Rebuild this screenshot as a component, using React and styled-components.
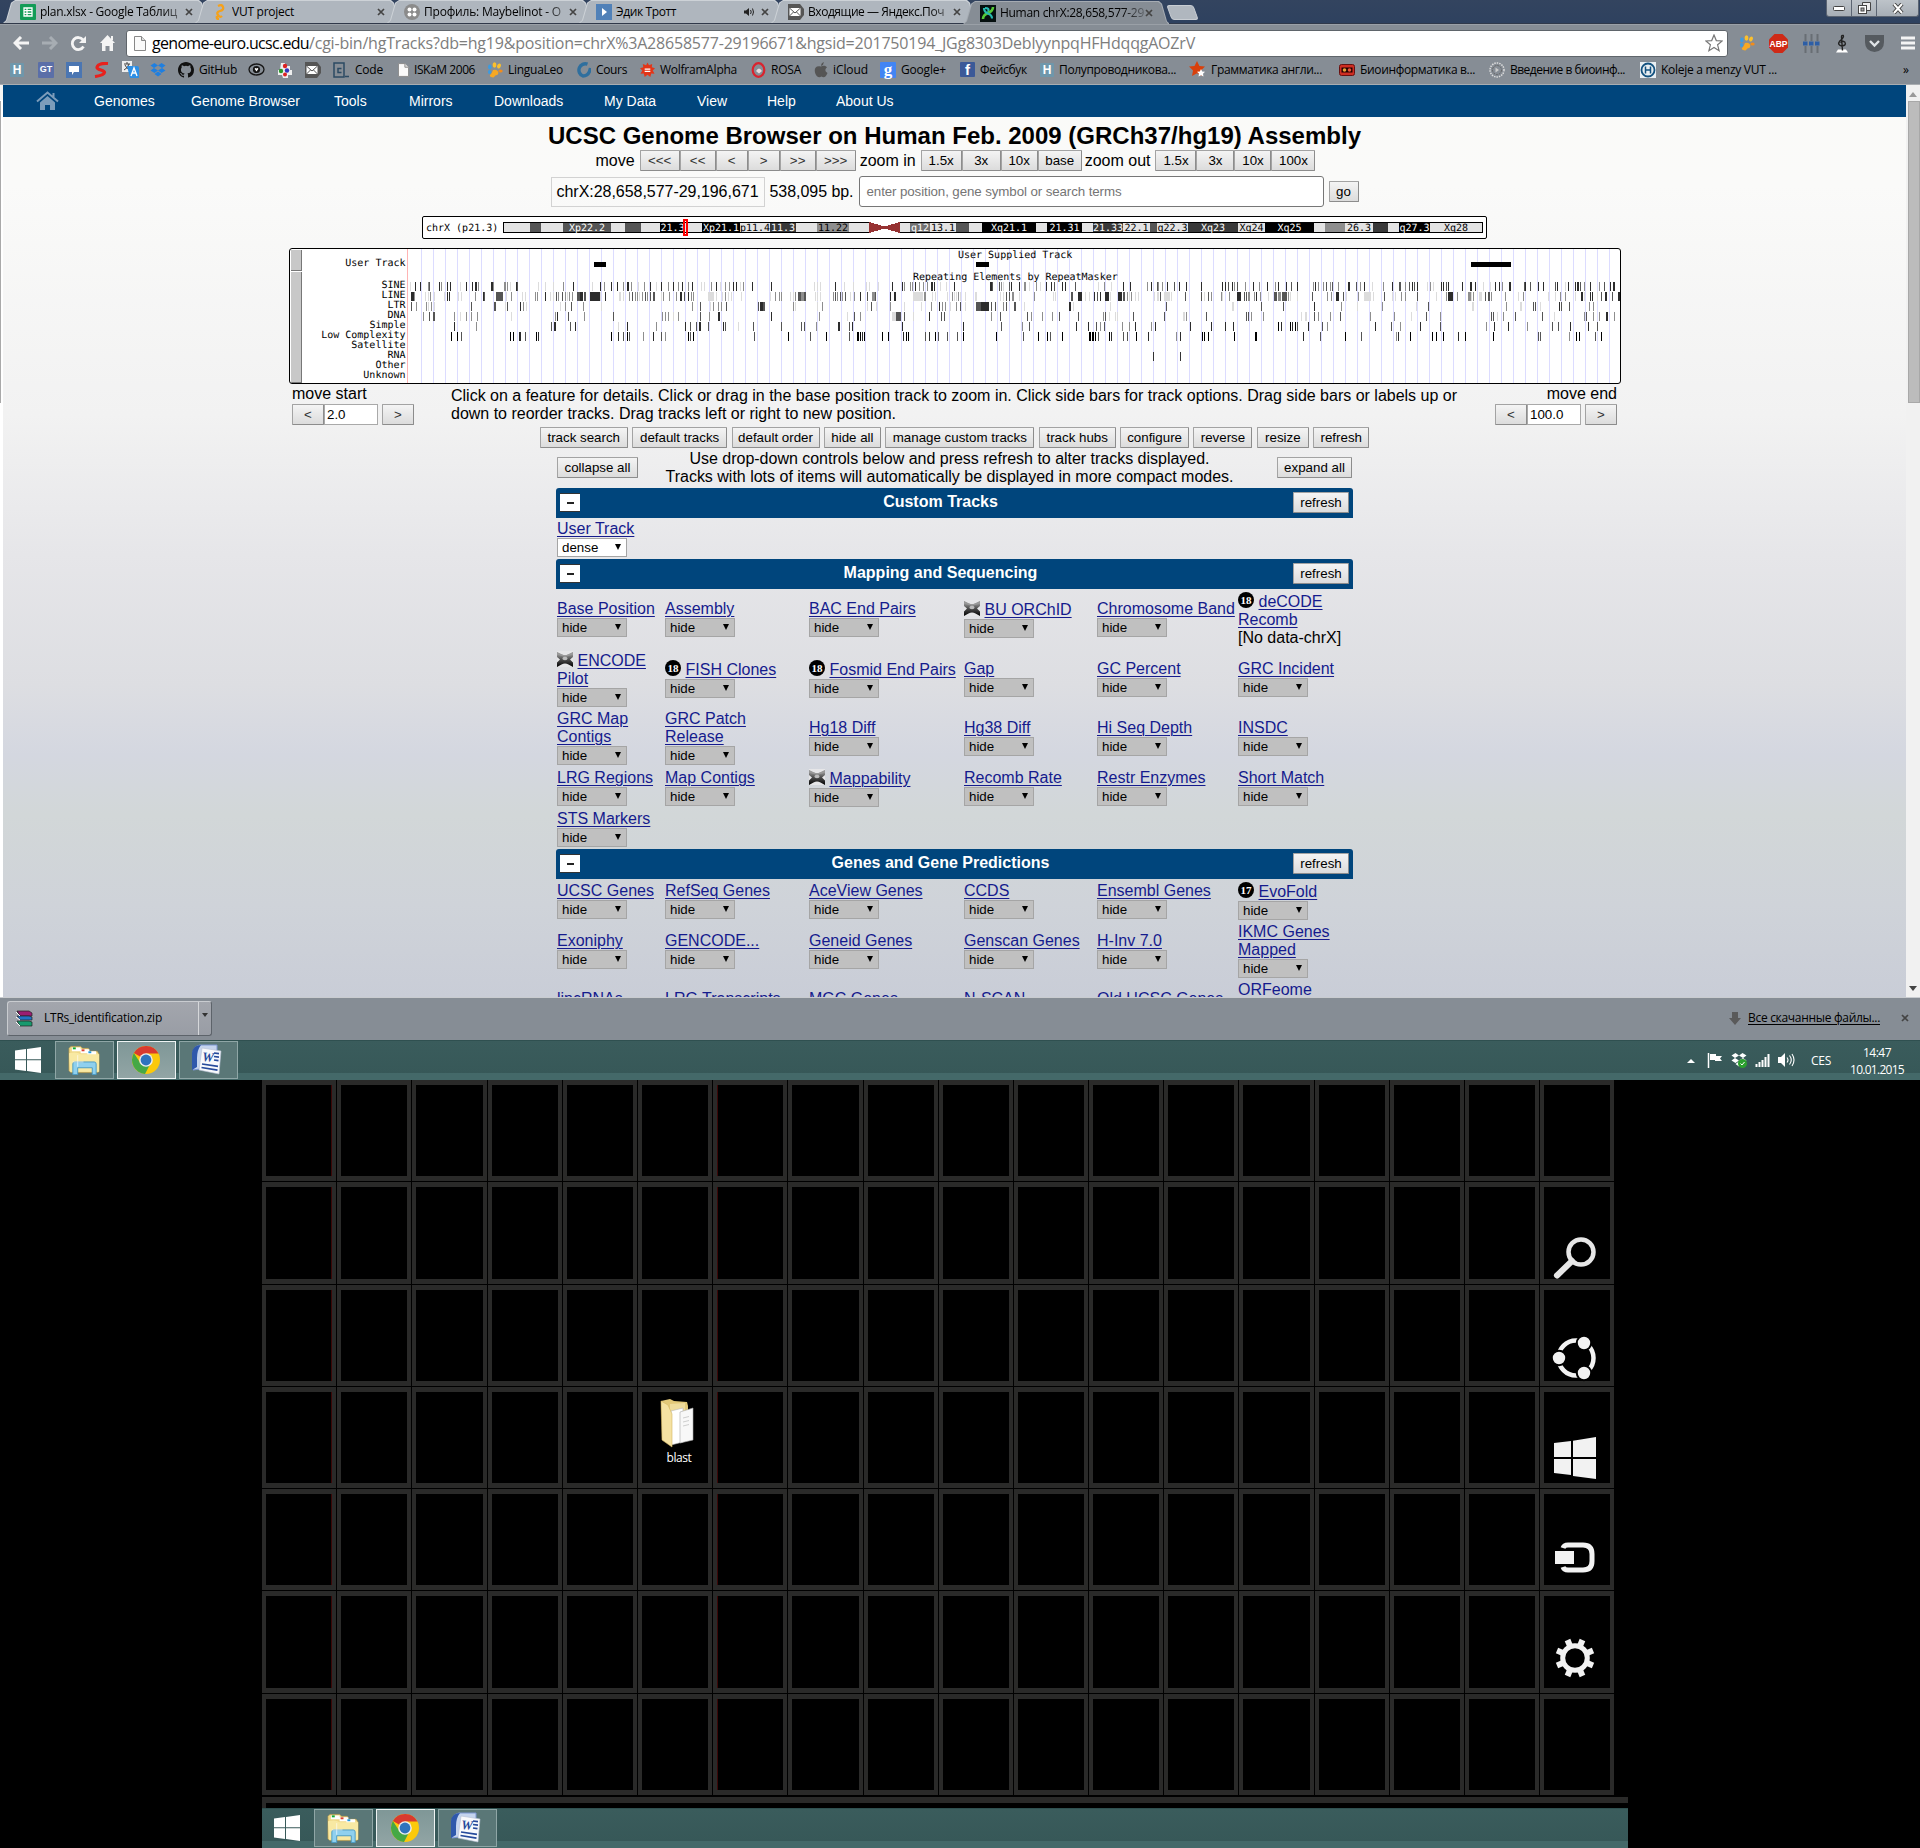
import React, { useLayoutEffect, useRef, useState } from "react";
import styled, { createGlobalStyle, css } from "styled-components";

const UI = `"Open Sans", "Noto Sans", sans-serif`;
const ARIAL = `"Liberation Sans", Arial, sans-serif`;
const NAVY = "#00457c";

const Global = createGlobalStyle`
  html, body { margin: 0; padding: 0; background: #000; }
  *, *::before, *::after { box-sizing: border-box; }
  svg { display: block; flex: none; }
`;

/* ---------- text that is tracked to a known width ---------- */
const FitBox = styled.span`
  display: inline-block;
  white-space: pre;
  flex: none;
`;
function Fit({ w, children }) {
  const ref = useRef(null);
  const [ls, setLs] = useState(0);
  useLayoutEffect(() => {
    const el = ref.current;
    if (!el) return;
    el.style.letterSpacing = "0px";
    const natural = el.getBoundingClientRect().width;
    const v = (w - natural) / String(children).length;
    el.style.letterSpacing = v + "px";
    setLs(v);
  }, [w, children]);
  return <FitBox ref={ref} style={{ letterSpacing: ls }}>{children}</FitBox>;
}

/* ---------- window frame ---------- */
const Screen = styled.div`
  width: 1920px;
  height: 1848px;
  overflow: hidden;
  background: #000;
  display: flex;
  flex-direction: column;
`;
const TabStrip = styled.div`
  height: 24px;
  background: linear-gradient(#33445f, #2e415f);
  display: flex;
  align-items: flex-end;
  padding-left: 3px;
  flex: none;
  border-bottom: 1px solid #30394a;
`;
const Tab = styled.div`
  position: relative;
  width: 206px;
  height: 23px;
  margin-right: -14px;
  margin-bottom: ${(p) => (p.$active ? "-1px" : "0")};
  display: flex;
  align-items: center;
  padding: 1px 0 0 17px;
  font: 12px ${UI};
  color: #000;
  z-index: ${(p) => (p.$active ? 2 : 1)};
  clip-path: polygon(0 100%, 3px 88%, 8px 12%, 12px 0, 196px 0, 199px 12%, 204px 88%, 207px 100%);
  background: ${(p) => (p.$active ? "#a5abb2" : "#cdd2d7")};
  &::before {
    content: "";
    position: absolute;
    inset: 0;
    z-index: -1;
    clip-path: polygon(1px 100%, 4px 88%, 9px 14%, 12px 1px, 195px 1px, 198px 14%, 203px 88%, 205px 100%);
    background: ${(p) => (p.$active ? "#868d95" : "#afb6be")};
  }
`;
const TabLabel = styled.div`
  width: ${(p) => p.$w}px;
  margin-left: 4px;
  line-height: 18px;
  overflow: hidden;
  white-space: nowrap;
  ${(p) => p.$fade && css`mask-image: linear-gradient(90deg, #000 84%, rgba(0,0,0,.25));`}
`;
const NewTab = styled.div`
  width: 27px;
  height: 15px;
  margin: 0 0 3px 14px;
  background: #b0b7bf;
  border: 1px solid #c8cdd3;
  border-radius: 3px;
  transform: skewX(20deg);
`;
const WindowButtons = styled.div`
  margin-left: auto;
  margin-right: 1px;
  align-self: flex-start;
  display: flex;
  height: 17px;
  border: 1px solid #5b6472;
  border-top: 0;
  background: linear-gradient(#bdc3c9, #a7aeb6);
  border-radius: 0 0 3px 3px;
`;
const WindowButton = styled.div`
  width: ${(p) => p.$w}px;
  display: flex;
  align-items: center;
  justify-content: center;
  & + & { border-left: 1px solid #5b6472; }
`;
const Toolbar = styled.div`
  height: 36px;
  flex: none;
  background: #868d95;
  border-top: 1px solid #9aa0a7;
  display: flex;
  align-items: center;
  padding: 1px 6px 0 13px;
`;
const ToolIcon = styled.div`
  width: ${(p) => p.$w}px;
  padding-left: ${(p) => p.$pl || 0}px;
  flex: none;
`;
const Omnibox = styled.div`
  width: 1602px;
  height: 27px;
  flex: none;
  background: #fff;
  border: 1px solid #5f656b;
  border-radius: 3px;
  display: flex;
  align-items: center;
  padding: 0 4px 0 7px;
  font: 16px/22px ${UI};
  color: #7d7d7d;
  b { font-weight: 400; color: #000; margin-left: 6px; }
`;
const StarSlot = styled.div`margin-left: auto;`;
const Bookmarks = styled.div`
  height: 25px;
  flex: none;
  background: #868d95;
  border-bottom: 1px solid #a9adb1;
  display: flex;
  align-items: center;
  padding: 0 0 5px 10px;
  font: 12px/18px ${UI};
  color: #000;
`;
const Bookmark = styled.div`
  width: ${(p) => p.$w}px;
  display: flex;
  align-items: center;
  gap: 5px;
  flex: none;
`;
const Viewport = styled.div`
  height: 912px;
  flex: none;
  display: flex;
  background: #f2f2f2;
`;
const LeftEdge = styled.div`
  width: 3px;
  background: linear-gradient(#f6f6f4 15px, #fff 15px);
  display: flex;
  &::before { content: ""; width: 1px; height: 302px; margin-top: 16px; background: #a9a9a9; }
`;
const Scrollbar = styled.div`
  width: 14px;
  background: #f1f1f1;
  display: flex;
  flex-direction: column;
  align-items: center;
  justify-content: space-between;
  padding: 7px 0 6px;
`;
const Thumb = styled.div`
  width: 12px;
  height: 302px;
  margin: 4px 0 auto 2px;
  background: #bcbcbc;
  border: 1px solid #a8a8a8;
`;
const Page = styled.main`
  width: 1903px;
  height: 912px;
  overflow: hidden;
  font: 16px/18px ${ARIAL};
  color: #000;
  background: linear-gradient(#fafaf8 0, #fafaf9 100px, #f2f2f2 330px, #e6e6e9 470px, #dddee2 600px, #d4d7e0 670px, #d2d7d8 730px, #cfd3d9 820px, #c9cdd7 912px);
  display: flex;
  flex-direction: column;
  align-items: center;
`;
const Nav = styled.nav`
  width: 100%;
  height: 32px;
  flex: none;
  background: ${NAVY};
  color: #fff;
  font-size: 14px;
  display: flex;
  align-items: center;
  padding: 0 0 2px 33px;
`;
const NavItem = styled.span`
  width: ${(p) => p.$w}px;
  padding-top: 1px;
  white-space: nowrap;
  flex: none;
`;
const Title = styled.h1`
  margin: 5px 0 0;
  height: 28px;
  font: bold 24px/28px ${ARIAL};
  flex: none;
`;
const Row = styled.div`
  display: flex;
  align-items: center;
  flex: none;
  gap: ${(p) => p.$gap || 0}px;
  height: ${(p) => p.$h}px;
  margin-top: ${(p) => p.$mt || 0}px;
  padding-left: ${(p) => p.$pl || 0}px;
`;
const Button = styled.button`
  width: ${(p) => p.$w}px;
  height: 21px;
  flex: none;
  padding: 0;
  border: 1px solid #a3a3a3;
  border-bottom-color: #8c8c8c;
  border-right-color: #8c8c8c;
  border-radius: 1px;
  background: linear-gradient(#f4f4f4, #dcdcdc);
  font: 13.33px/17px ${ARIAL};
  color: ${(p) => (p.$dim ? "#333" : "#000")};
  white-space: nowrap;
`;
const Lead = styled.span`margin: 0 5px 0 ${(p) => p.$ml || 0}px; white-space: nowrap;`;
const PositionBox = styled.div`
  width: 214px;
  height: 30px;
  border: 1px solid #d2d2d2;
  padding: 5px 5px;
  white-space: nowrap;
`;
const SearchBox = styled.div`
  width: 465px;
  height: 31px;
  border: 1px solid #767676;
  border-radius: 3px;
  background: #fff;
  font-size: 13.33px;
  color: #757575;
  padding: 6px 7px;
`;
const Ideogram = styled.div`
  width: 1065px;
  height: 23px;
  flex: none;
  margin-top: 9px;
  border: 1px solid #000;
  border-radius: 2px;
  background: #fff;
`;
const TrackFrame = styled.div`
  width: 1332px;
  height: 136px;
  flex: none;
  margin: 9px 0 0 1px;
  border: 1px solid #000;
  border-radius: 3px;
  background: #fff;
  overflow: hidden;
`;
const Below = styled.div`
  width: 1325px;
  height: 43px;
  flex: none;
  display: flex;
`;
const MoveBlock = styled.div`
  padding-top: 1px;
  display: flex;
  flex-direction: column;
  gap: 1px;
  align-items: ${(p) => (p.$right ? "flex-end" : "flex-start")};
`;
const NumberInput = styled.div`
  width: 54px;
  height: 21px;
  margin-right: 4px;
  border: 1px solid #a9a9a9;
  background: #fff;
  font-size: 13.33px;
  padding: 1px 2px;
`;
const Hint = styled.p`
  margin: 3px auto 0 37px;
  width: 1020px;
`;
const NoteRow = styled.div`
  width: 797px;
  height: 40px;
  flex: none;
  display: flex;
  justify-content: space-between;
  align-items: center;
  padding: 0 1px 1px;
  text-align: center;
`;
const Note = styled.p`margin: 0; padding-right: 16px;`;
const Group = styled.section`
  width: 797px;
  flex: none;
  padding-bottom: ${(p) => p.$pad || 0}px;
`;
const GroupBar = styled.header`
  height: 30px;
  background: ${NAVY};
  border-radius: 3px 3px 0 0;
  display: flex;
  align-items: center;
  justify-content: space-between;
  padding: 0 4px 1px 4px;
  color: #fff;
  font-weight: bold;
`;
const GroupTitle = styled.span`margin: 0 0 2px 8px;`;
const Collapse = styled.span`
  width: 20px;
  height: 19px;
  background: #fff;
  border: 1px solid #333;
  border-width: 1px 0;
  display: flex;
  align-items: center;
  justify-content: center;
  &::after { content: ""; width: 7px; height: 2px; background: #222; }
`;
const GridRow = styled.div`
  display: grid;
  grid-template-columns: 108px 144px 155px 133px 141px 115px;
  align-items: center;
  height: ${(p) => p.$h}px;
  padding-left: 1px;
`;
const Cell = styled.div`
  padding-top: ${(p) => (p.$badge ? 2 : 0)}px;
  white-space: nowrap;
`;
const Link = styled.a`
  color: #151b8d;
  text-decoration: underline;
  text-underline-offset: 2px;
  text-decoration-thickness: 1px;
`;
const BadgeSlot = styled.span`
  display: inline-block;
  width: 16px;
  height: 16px;
  margin: -4px 4.500px -2px 0;
  vertical-align: 1px;
`;
const Select = styled.div`
  width: 70px;
  height: 19px;
  border: 1px solid #a5a5a5;
  background: ${(p) => (p.$on ? "#fff" : "#c0c0c0")};
  font-size: 13.33px;
  line-height: 17px;
  padding: 0 5px 0 4px;
  display: flex;
  justify-content: space-between;
  align-items: center;
`;
const Caret = styled.i`
  border: 3.500px solid transparent;
  border-top: 6px solid #000;
  border-bottom: 0;
  margin-bottom: 2px;
`;

/* ---------- downloads shelf ---------- */
const Shelf = styled.div`
  height: 43px;
  flex: none;
  background: #868d95;
  border-top: 1px solid #c9ccd0;
  display: flex;
  align-items: center;
  padding: 0 11px 2px 7px;
  font: 12px/18px ${UI};
`;
const DownloadItem = styled.div`
  width: 205px;
  height: 35px;
  border: 1px solid #c9ccd0;
  border-right-color: #5d636a;
  border-bottom-color: #5d636a;
  border-radius: 3px;
  background: linear-gradient(#a3a6ad, #999da5);
  display: flex;
  align-items: center;
  padding-left: 7px;
  gap: 11px;
`;
const DownloadMenu = styled.div`
  align-self: stretch;
  margin-left: auto;
  width: 13px;
  border-left: 1px solid #d5d7da;
  display: flex;
  justify-content: center;
  padding-top: 11px;
`;
const ShelfRight = styled.div`
  margin-left: auto;
  display: flex;
  align-items: center;
  gap: 7px;
`;
const AllDownloads = styled.a`
  margin-right: 14px;
  span { text-decoration: underline; text-underline-offset: 2px; }
`;

/* ---------- taskbar and second monitor ---------- */
const TaskbarBox = styled.div`
  width: ${(p) => p.$w}px;
  height: 40px;
  flex: none;
  margin-left: ${(p) => p.$ml || 0}px;
  background: linear-gradient(#2f5050 0, #2f5050 1px, #3a5c5c 1px, #375858 33px, #446969 33px);
  display: flex;
  align-items: center;
  padding: 0 16px 0 ${(p) => p.$pl}px;
  color: #fff;
  font: 12px/17px ${UI};
`;
const TaskButton = styled.div`
  width: 59px;
  height: 38px;
  margin-right: 3px;
  flex: none;
  border: 1px solid ${(p) => (p.$active ? "#eef3f3" : "#8fa6a6")};
  background: ${(p) => (p.$active ? "linear-gradient(#7f9797, #92a5a5)" : "#5a7777")};
  display: flex;
  align-items: center;
  justify-content: center;
  padding-right: 1px;
`;
const StartSlot = styled.div`width: 40px; flex: none;`;
const Tray = styled.div`
  margin-left: auto;
  display: flex;
  align-items: center;
  gap: 7px;
`;
const Expand = styled.div`margin: 2px 5px 0 0;`;
const Lang = styled.span`margin: 0 12px 0 9px; font-size: 12px;`;
const Clock = styled.div`
  display: flex;
  flex-direction: column;
  align-items: center;
  line-height: 17px;
  padding-top: 2px;
`;
const Desktop = styled.div`
  position: relative;
  height: 717px;
  flex: none;
  padding-left: 262px;
`;
const WallGrid = styled.div`
  width: 1354px;
  display: grid;
  grid-template-columns: repeat(18, 75.2px);
  grid-template-rows: repeat(7, 102.3px);
`;
const WallCell = styled.div`
  border: solid #2a2a29;
  border-width: 5px 4px;
  margin: 0 1px 1px 0;
  box-shadow: ${(p) => (p.$red === "r" ? "inset -1px 0 #3c0808" : p.$red === "l" ? "inset 1px 0 #3c0808" : "none")};
`;
const Strip = styled.div`
  width: 1366px;
  height: 11px;
  margin-left: 262px;
  flex: none;
  border: 4px solid #2a2a29;
  border-width: 6px 0 0 4px;
`;
const Charm = styled.div`
  position: absolute;
  left: 1550px;
  top: ${(p) => p.$top}px;
`;
const DesktopIcon = styled.div`
  position: absolute;
  left: 640px;
  top: 318px;
  width: 78px;
  display: flex;
  flex-direction: column;
  align-items: center;
  color: #fff;
  font: 12px/16px ${UI};
`;

/* ---------- small drawings ---------- */
const Close = ({ c = "#444" }) => (
  <svg width="8" height="8" viewBox="0 0 8 8"><path d="M1 1l6 6M7 1l-6 6" stroke={c} strokeWidth="1.7" /></svg>
);
const WinLogo = ({ s = 26, c = "#fff" }) => (
  <svg width={s} height={s} viewBox="0 0 26 26" fill={c}>
    <path d="M0 3.6L11 2v10.300H0zM12 1.900L26 0v12.300H12zM0 13.300h11V24L0 22.400zM12 13.300h14V26l-14-1.900z" />
  </svg>
);
const Mail = () => (
  <svg width="16" height="18" viewBox="0 0 16 18"><path d="M0 1h12l4 5v6l-4 5H0z" fill="#555" /><rect x="1.500" y="5" width="11" height="8" fill="#fff" /><path d="M1.500 5l5.500 5 5.500-5M1.500 13l4-4M12.500 13l-4-4" stroke="#555" fill="none" /></svg>
);
const Paw = () => (
  <svg width="16" height="16" viewBox="0 0 16 16">
    <path d="M6 8q4-1 5 1.500t-1 3.500q-2 0-2.500 1.500T4 15q-2-1-.5-2.500T6 8z" fill="#f7a823" />
    <g fill="#fbc02d"><ellipse cx="7.500" cy="3" rx="1.900" ry="2.700" /><ellipse cx="12" cy="4" rx="1.800" ry="2.500" transform="rotate(30 12 4)" /></g>
    <g fill="#3d9be0"><ellipse cx="2.800" cy="5" rx="1.800" ry="2.400" /><ellipse cx="2.500" cy="10" rx="1.600" ry="2" /></g>
    <ellipse cx="13.500" cy="9" rx="2.200" ry="1.500" fill="#f28c1b" />
  </svg>
);
const Doc = ({ w = 12, h = 15 }) => (
  <svg width={w} height={h} viewBox="0 0 12 15"><path d="M.5.5h7l4 4v10H.5z" fill="#fafafa" stroke="#888" /><path d="M7.500.5v4h4" fill="#ddd" stroke="#888" /></svg>
);
const Glyph = styled.span`
  width: ${(p) => p.$s || 16}px;
  height: ${(p) => p.$s || 16}px;
  flex: none;
  display: flex;
  align-items: center;
  justify-content: center;
  background: ${(p) => p.$bg || "transparent"};
  color: ${(p) => p.$c || "#fff"};
  font: bold ${(p) => p.$f || 12}px/1 ${(p) => (p.$serif ? `"Liberation Serif", serif` : ARIAL)};
  border-radius: ${(p) => p.$r || 1}px;
`;
const Dropbox = ({ c = "#1f7fe0" }) => (
  <svg width="16" height="16" viewBox="0 0 16 16" fill={c}><path d="M4.500 1L8 3.500 4 6 .5 3.500zM11.500 1L15.500 3.500 12 6 8 3.500zM.5 8.500L4 6l4 2.500L4.500 11zM12 6l3.500 2.500-4 2.500L8 8.500zM4.500 12L8 9.500l3.500 2.500L8 14.500z" /></svg>
);

const bookmarkIcons = {
  h: <Glyph $s={14} $bg="#6f97ab" $f={12}>H</Glyph>,
  gt: <Glyph $bg="#5b6fa8" $f={9}>GT</Glyph>,
  chat: <svg width="16" height="16"><rect width="16" height="16" fill="#4b76b2" /><path d="M3 4h10v6H8l-2 3v-3H3z" fill="#fff" /></svg>,
  s: <svg width="16" height="16" viewBox="0 0 16 16"><path d="M14 1.500C7 1 3 3 3 5.500S11 8 10.500 10.500 5 14 1 14.500" stroke="#e8211d" strokeWidth="3.200" fill="none" /></svg>,
  tr: <svg width="17" height="17" viewBox="0 0 17 17"><rect width="10" height="11" fill="#eee" /><path d="M2 3h6M5 1v2M7 3Q6 7 2 9M3 4q1 3 5 5" stroke="#444" fill="none" /><path d="M5 5h10a2 2 0 012 2v10H8z" fill="#2d8fe5" /><path d="M9 15l3-8 3 8M10 12h4" stroke="#fff" strokeWidth="1.400" fill="none" /></svg>,
  db: <Dropbox />,
  gh: <svg width="16" height="16" viewBox="0 0 16 16"><path fill="#111" d="M8 0C3.580 0 0 3.580 0 8c0 3.540 2.290 6.530 5.470 7.590.4.070.550-.170.550-.380v-1.490c-2.010.370-2.530-.490-2.690-.940-.090-.230-.480-.940-.820-1.130-.280-.150-.680-.520-.010-.530.630-.010 1.080.580 1.230.820.720 1.210 1.870.870 2.330.660.070-.520.280-.870.510-1.070-1.780-.2-3.640-.890-3.640-3.950 0-.870.310-1.590.820-2.150-.080-.2-.360-1.020.080-2.120 0 0 .670-.210 2.200.820a7.600 7.600 0 014 0c1.530-1.040 2.200-.820 2.200-.820.440 1.100.160 1.920.080 2.120.510.560.820 1.270.820 2.150 0 3.070-1.870 3.750-3.650 3.950.290.250.540.730.540 1.480v2.200c0 .210.150.460.550.380A8 8 0 0016 8c0-4.420-3.580-8-8-8z" /></svg>,
  eye: <svg width="17" height="16" viewBox="0 0 17 16"><ellipse cx="8.500" cy="7.500" rx="7.500" ry="5.500" fill="none" stroke="#151515" strokeWidth="1.300" /><circle cx="8.500" cy="7.500" r="3.600" fill="#151515" /><path d="M8.500 9.500L6.700 7q.2-1.500 1.800-.5 1.600-1 1.800.5z" fill="#fff" /></svg>,
  rgb: <svg width="15" height="16" viewBox="0 0 15 16"><path d="M4 1h4v3h5v4h2v5h-4v3H6l-1-3H1V8h2z" fill="#eee" /><circle cx="8" cy="4" r="2.200" fill="#d22" /><circle cx="4" cy="9" r="2.200" fill="#2a9a2a" /><circle cx="10" cy="8.500" r="2.200" fill="#33b" /><circle cx="8" cy="12.500" r="2" fill="#d22" /></svg>,
  mail: <Mail />,
  code: <svg width="17" height="16"><rect x="1" y="1" width="10" height="14" fill="none" stroke="#2b4a63" strokeWidth="1.500" /><path d="M8.500 6.500H5v4h3.500M12 14.500h4" stroke="#2b4a63" strokeWidth="1.500" fill="none" /></svg>,
  doc: <Doc w={11} h={14} />,
  paw: <Paw />,
  cours: <svg width="16" height="16" viewBox="0 0 16 16"><path d="M12.500 2.200A6 6 0 108 14q6 0 7.500-8" fill="none" stroke="#2f6f9e" strokeWidth="3.400" /></svg>,
  wolf: <svg width="15" height="16" viewBox="0 0 16 16"><path d="M8 0l1.600 3L13 1.500 12.600 5 16 6l-2.400 2.500L15.500 12l-3.500-.2L11 15.500 8 13l-3 2.500L4 11.800l-3.500.2 2-3.500L0 6l3.500-1L3 1.500 6.500 3z" fill="#e33518" /><path d="M5 7h6M5 9.500h6" stroke="#fff" strokeWidth="1.200" /></svg>,
  rosa: <svg width="15" height="16" viewBox="0 0 15 16"><ellipse cx="7.500" cy="8" rx="5.800" ry="6.800" fill="none" stroke="#d9232e" strokeWidth="2.200" /><path d="M5 9q3-5 6 0l-3 2.500z" fill="#e9d9db" /></svg>,
  apple: <svg width="14" height="16" viewBox="0 0 14 16" fill="#555"><path d="M7 4.600C9 3 12 3.500 13 5.500c-2.500 1.500-2 4.500.5 5.500C12 15 10 16 7.500 14.600 5 16 3 15 1.500 12-.5 7 1.500 3 7 4.600zM7 4Q7 1 9.800 0 10 3 7 4z" /></svg>,
  g: <Glyph $bg="#4285f4" $f={17} $serif>g</Glyph>,
  fb: <Glyph $s={15} $bg="#3b5998" $f={15}>f</Glyph>,
  star: <svg width="17" height="17" viewBox="0 0 17 17"><path d="M8 0l2.400 5 5.600.6-4 3.900 1 5.500-5-2.700L3 15l1-5.500L0 5.600 5.500 5z" fill="#d8400c" /><path d="M12 8l1.200 2.500 2.800.3-2 2 .5 2.700-2.500-1.300-2.500 1.300.5-2.700-2-2 2.800-.3z" fill="#fff" /></svg>,
  bio: <svg width="16" height="14"><rect x=".5" y="1.500" width="15" height="11" rx="2" fill="#cf2d22" stroke="#611" /><rect x="2.500" y="4.500" width="11" height="5" fill="#200" /><circle cx="5.500" cy="7" r="1.800" fill="#e8a33a" /><circle cx="10.500" cy="7" r="1.800" fill="#e8563a" /></svg>,
  coin: <svg width="16" height="16"><circle cx="8" cy="8" r="7" fill="none" stroke="#ddd" strokeDasharray="1.500 1" strokeWidth="1.500" /><circle cx="8" cy="8" r="4.500" fill="none" stroke="#666" strokeDasharray="2 1" /><path d="M6.500 5.500l3.500 2.500-3.500 2.500z" fill="#ccc" /></svg>,
  kol: <svg width="16" height="16"><rect width="16" height="16" fill="#e8eef2" /><circle cx="8" cy="8" r="6.500" fill="none" stroke="#12517f" strokeWidth="1.800" /><path d="M5.500 4.500v7M10.500 4.500v7M5.500 8h5" stroke="#12517f" strokeWidth="1.500" /></svg>,
};

/* icon, label, label width, slot width */
const bookmarks = [
  ["h", "", 0, 28], ["gt", "", 0, 28], ["chat", "", 0, 28], ["s", "", 0, 28], ["tr", "", 0, 28], ["db", "", 0, 28],
  ["gh", "GitHub", 38, 70], ["eye", "", 0, 29], ["rgb", "", 0, 28], ["mail", "", 0, 28], ["code", "Code", 28, 65],
  ["doc", "ISKaM 2006", 61, 89], ["paw", "LinguaLeo", 55, 88], ["cours", "Cours", 31, 65], ["wolf", "WolframAlpha", 77, 111],
  ["rosa", "ROSA", 30, 63], ["apple", "iCloud", 35, 66], ["g", "Google+", 45, 80], ["fb", "Фейсбук", 47, 80],
  ["h", "Полупроводникова...", 117, 149], ["star", "Грамматика англи...", 111, 150], ["bio", "Биоинформатика в...", 115, 150],
  ["coin", "Введение в биоинф...", 115, 151], ["kol", "Koleje a menzy VUT ...", 116, 263],
];

const tabs = [
  { label: "plan.xlsx - Google Таблиц", w: 137, fade: true, icon: <svg width="16" height="16"><rect width="16" height="16" rx="1" fill="#139c57" /><path d="M4 4h8v8H4zM4 6.700h8M4 9.300h8M7 4v8" stroke="#fff" strokeWidth="1.300" fill="none" /></svg> },
  { label: "VUT project", w: 62, icon: <svg width="16" height="16" viewBox="0 0 16 16"><path d="M6 2q4-2 5 1t-3 4-2 4 4 1M7 15q-3 0-2-3" stroke="#f5a11a" strokeWidth="2.300" fill="none" /></svg> },
  { label: "Профиль: Maybelinot - О", w: 137, fade: true, icon: <svg width="16" height="16"><circle cx="8" cy="8" r="8" fill="#8b8b8b" /><g fill="#fff"><circle cx="5.500" cy="5.500" r="2" /><circle cx="10.500" cy="5.500" r="2" /><circle cx="5.500" cy="10.500" r="2" /><circle cx="10.500" cy="10.500" r="2" /></g></svg> },
  { label: "Эдик Тротт", w: 60, sound: true, icon: <svg width="16" height="16"><rect width="16" height="16" fill="#5181b8" /><path d="M6 4l5 4-5 4z" fill="#fff" /></svg> },
  { label: "Входящие — Яндекс.Поч", w: 136, fade: true, icon: <Mail /> },
  { label: "Human chrX:28,658,577-29", w: 144, fade: true, active: true, icon: <svg width="16" height="17"><rect width="16" height="17" fill="#061010" /><path d="M5 3q5 0 3 4" stroke="#28b9b0" strokeWidth="2.200" fill="none" /><path d="M13 2q0 4-5 6t-5 6" stroke="#55c837" strokeWidth="2.600" fill="none" /><path d="M4 3q0 4 4 5.500t4 5" stroke="#28b9b0" strokeWidth="2.200" fill="none" /></svg> },
];

/* ---------- chromosome ideogram ---------- */
const L = "#e3e3e3", G5 = "#555", G3 = "#393939", G8 = "#8e8e8e", K = "#000";
const bands = [
  [503, 530, L], [530, 541, G5], [541, 563, L], [563, 611, G5, "Xp22.2"], [611, 625, L], [625, 641, G5], [641, 660, L],
  [660, 685, K, "21.3"], [685, 702, L], [702, 740, K, "Xp21.1"], [740, 770, L, "p11.4"], [770, 796, G3, "11.3"], [796, 817, L],
  [817, 849, G8, "11.22"], [849, 869, L], [900, 910, L], [910, 930, "#727272", "q12"], [930, 956, L, "13.1"], [956, 969, G5],
  [969, 982, L], [982, 1036, K, "Xq21.1"], [1036, 1047, L], [1047, 1082, K, "21.31"], [1082, 1093, L], [1093, 1123, G3, "21.33"],
  [1123, 1150, L, "22.1"], [1150, 1157, G5], [1157, 1188, L, "q22.3"], [1188, 1238, G3, "Xq23"], [1238, 1265, L, "Xq24"],
  [1265, 1314, K, "Xq25"], [1314, 1325, L], [1325, 1345, G8], [1345, 1373, L, "26.3"], [1373, 1388, G3], [1388, 1399, L],
  [1399, 1430, K, "q27.3"], [1430, 1482, L, "Xq28"],
];
const Mono = styled.text`
  font: 10px "DejaVu Sans Mono", "Liberation Mono", monospace;
  text-rendering: geometricPrecision;
`;
const IdeogramSvg = () => (
  <svg width="1063" height="21" viewBox="423 217 1063 21" shapeRendering="crispEdges">
    <Mono x="426" y="230.500">chrX (p21.3)</Mono>
    {bands.map(([a, b, c]) => <rect key={a} x={a} y="222" width={b - a} height="10.500" fill={c} />)}
    <path d="M869 222.500H503.500V232.500H869M900 222.500H1482.500V232.500H900" fill="none" stroke="#000" />
    <path d="M869 222l15.500 4.500L900 222v11l-15.500-4.500L869 233z" fill="#963232" />
    {bands.filter((b) => b[3]).map(([a, b, c, t]) => (
      <Mono key={a} x={(a + b) / 2} y="230.500" textAnchor="middle" fill={c === L || c === G8 ? "#000" : "#fff"}>{t}</Mono>
    ))}
    <rect x="684" y="220" width="3" height="15" fill="none" stroke="#f00" strokeWidth="2" />
  </svg>
);

/* ---------- repeat tracks: position, shade, optional width ---------- */
const shade = { l: "#dcdcdc", m: "#8e8e8e", g: "#555555", d: "#2c2c2c", k: "#000" };
const repeats = [
  [282,
    "305l 316d 328d 346m 350g 372d 377m 391d 399d 421l 436d 451d 456d2 463m 495d2 500m 525m2 532m 538l 552d2 556g 605l 620l 640l 662m 686d 730l 750d 758m 775d 790d 804m 812d2 822m 838l 852m 866d 880l 892d 908m 920d 932m 942d 955m 965d 985l 992l 1010m 1020d 1030l 1042m 1052m 1060d 1068d 1078l 1083m 1105d 1150d 1250l 1258l 1265l 1299d 1320l 1342l 1372l 1380l 1400l 1432d 1456d 1462m 1475m 1480m 1487d 1497m 1505m 1514m 1523d2 1530d 1545l 1558l",
    "9d 92d2 97g 112g 117m 122l 135g 139d 158d 168m2 180l 197m 205l 218d 230d 237g 255d 261d 285g 337l 350m 366l 393d 410d 448m 457d 470g 474m 483m 494d 510g 520d 536d 571d 619d 625d 633g 641d 645m 653g 670m 690d 702m 721d 739m 745d 764d 776g 790d 825m 830d 838m 849m 856g 865m 869g 883m 905d2 923g 932m 941d 960l 985m 1005d 1020g 1024g 1035m 1044g 1050d 1056g 1061d 1085l 1091m 1098l 1116d 1120d 1127g 1133d 1165d 1182d2 1194d 1212l 1228l 1240d 1249d 1255m 1270d2 1304g 1308d 1318g 1338d 1348d 1376g 1380d 1399l 1404d 1420d 1425d2 1433g 1442m 1454d 1475m 1486g 1500d 1507d2"],
  [292,
    "307d3 315m 340l 346l 352m 362l 385l 391d 397d 418l 424l 457m 475d 479g 506g7 530l 541m 568l 573l 598m 602m 620d 632l 640l 646g 652m 660g 667m 673l 678m 685m 695g4 703d3 711g2 726d10 750l 762d 795l2 803l 818m 824g 832m 836m 840l 848m 854g 860m 866g 874g2 893l 898m 910m 928m 936d2 947g 955d 962m 968m 1003l6 1022l 1035l 1042m 1050l 1057l 1080l 1148l 1160m 1168m 1172m 1195l 1200l 1205m 1212g3 1219m3 1227g2 1252l 1258l 1264l 1294m 1299g 1305m 1310g 1316m 1322g 1335l 1345m 1357d 1374g 1385m3 1393g 1427d 1437d2 1482l10 1508m2 1526l 1533l 1562l",
    "5m 10l 14l 19m 24l 35l 57l2 115l 120l 127g 134g 141m2 158l 192m 234l 240l 275g2 291d4 308l 317l 329d 335g 341d 352d4 364l 382d4 393g2 402m 408l 413m 420l 427l 465l 470l 473l 479g 486l6 502l 534g 571g 577l 587g 593m 616m 619l 634m 654d4 668g 673g 679m2 692m 697d 705m 724l 736g3 747m3 756g5 768m 773l 790l 823g 858m 866m 878d3 893g 900l 928m 941l6 955l 961l 987g 1004l 1012l 1025m 1035m 1062g 1105l 1127m 1133d5 1152m 1178m3 1185l 1190m 1202l3 1216g 1223g2 1230m 1262m 1292l 1302m 1360l 1375l 1388m 1399m 1420l 1435d2 1441l 1455d 1460d 1470l 1480g 1490d2 1505g 1519d2"],
  [302,
    "307g 318m 342m 347l 355m 360l 447g 502g2 527l 532g 562d 569m 577l 655l 668m 682g 710m 753l 965m 983g 1008l 1013m 1025m 1032m 1044g 1120g 1124d4 1131g2 1200m 1205l 1258l 1270m 1375l 1384g 1396l 1428m 1460l 1500l 1525m 1542d 1550m 1556m",
    "0l 14m 24g 35l 59g6 72d8 93g 102g 122m 129g 145g2 168l 271d2 280l 364l 492g 642l2 707g 757g 829d 889m 926l 982m 1060l 1087g 1187l2 1264m 1297l2 1325g 1330g 1341l 1385d 1390g 1407g 1453m 1461m"],
  [312,
    "336m 350g 359g2 407m 423l 436m 448m 461m 541l 645m 650d 675g 712m 780g 895m 902m 908m 920l 933m 984g 1005m 1026d2 1150d 1262m 1328l 1345g 1358m 1432l4 1442g5 1452g 1460g 1482l 1520d 1548g 1555g",
    "93m 114g 175g 184m 210m 232m 248g 291g 348m 352g 361l 375l 381l 417g 487g 530l2 538m 583g 673g 677g 685m 713m 798l 808l2 827g 836m 865m 886g 955m 1010m 1048l 1082g 1115m 1230g 1235g 1243l 1258m 1285g 1345g 1373l 1441m 1446g 1463m 1475m 1492d2 1510m"],
  [322,
    "407d 459m 635g 641d2 679g 692d 792l 812d 880m 949d 960g 975g 980d2 1003g 1037d 1042g 1072l 1107g 1174g 1220g 1226g 1254m 1306d2 1333g 1340d 1456d",
    "30d 116g 165m 180g 287d 315d 333g 341m 350g 391m 408m 420d 457m 466d 546d 593d 626d 643d 745k 752d 774k 779d 784k 789g 814d 846g 857m 966d 1003g 1024m 1068d 1114g 1219m 1238d 1268d 1311m 1368g 1383g 1410d 1450d 1472g"],
  [332,
    "400k 415k 424g 539k 547k 560d2 574g 599k 604d 775k 792d 804g 812k 818g 850m 873d 893g 902m 955k 961g 967k 1110g 1190k 1240g 1279k 1333g 1350k2 1357k 1363d 1368k 1410k 1424k 1459d 1465k 1470k 1510g 1520d 1534k 1540g 1562g",
    "16g 30k 105k 166g 200k 220k 228g 256k 316k2 323k2 331k 337g 361k 366d 393g 402g 423k 450d 514m 523d 573k 579k 587k 645k 694k2 802d 841g 898k 934g 1015m 1018d 1046k 1096k 1104k 1121k 1154d 1170k 1234k 1336g 1341g 1407m 1424k 1430k 1466g 1480k"],
];
const decode = (s, origin, k) => s.split(" ").map((t) => {
  const [, x, c, w] = t.match(/(\d+)([a-z])(\d*)/);
  return { x: Math.round(origin + x / k - 0.3), c: shade[c], w: w ? +w : 1 };
});
const marks = repeats.flatMap(([y, a, b]) => [...decode(a, 280, 2.34), ...decode(b, 950, 2.2725)].map((m) => ({ ...m, y })));
const rowLabels = ["SINE", "LINE", "LTR", "DNA", "Simple", "Low Complexity", "Satellite", "RNA", "Other", "Unknown"];

const Tracks = () => (
  <svg width="1330" height="134" viewBox="290 249 1330 134" shapeRendering="crispEdges">
    {Array.from({ length: 100 }, (_, i) => <rect key={i} x={421 + i * 12} y="249" width="1" height="134" fill="#dcdcff" />)}
    <rect x="407" y="249" width="1" height="134" fill="#ffb4b4" />
    {[[250, 21], [272, 111]].map(([y, h]) => (
      <g key={y}><rect x="291" y={y} width="11" height={h} fill="#777" /><rect x="291" y={y} width="10" height={h - 1} fill="#c8c8c8" /></g>
    ))}
    <Mono x="405.500" y="266" textAnchor="end">User Track</Mono>
    {rowLabels.map((t, i) => <Mono key={t} x="405.500" y={288 + i * 10} textAnchor="end">{t}</Mono>)}
    <Mono x="958" y="258">User Supplied Track</Mono>
    <Mono x="913" y="280">Repeating Elements by RepeatMasker</Mono>
    <rect x="594" y="262" width="12" height="5" /><rect x="976" y="262" width="13" height="5" /><rect x="1471" y="262" width="40" height="5" />
    {marks.map((m, i) => <rect key={i} x={m.x} y={m.y} width={m.w} height="9" fill={m.c} />)}
    <rect x="1153" y="352" width="1" height="9" fill="#333" /><rect x="1180" y="352" width="1" height="9" fill="#333" />
  </svg>
);

/* ---------- track controls ---------- */
const Badge = ({ kind }) => (
  <BadgeSlot>
    {kind === "helix" ? (
      <svg width="16" height="16" viewBox="0 0 16 16">
        <defs><linearGradient id="helixTone" x1="0" y1="0" x2="0" y2="1"><stop offset="0" stopColor="#bbb" /><stop offset=".45" stopColor="#555" /><stop offset="1" stopColor="#000" /></linearGradient></defs>
        <rect width="16" height="16" fill="#e6e6e8" />
        <path d="M0 1l5 2.500q3 1 6 0L16 1v5l-3 2.500 3 3V16l-4.500-2.500q-3.500-2-7 0L0 16v-4.500l3-3L0 6z" fill="url(#helixTone)" />
        <ellipse cx="8" cy="7.500" rx="2.600" ry="1.700" fill="#bbb" /><path d="M0 1l5 2.500q3 1 6 0L16 1v2.500L8 6 0 3.500z" fill="#999" />
      </svg>
    ) : (
      <svg width="16" height="16"><circle cx="8" cy="8" r="8" /><text x="8" y="12" textAnchor="middle" fill="#fff" fontFamily="Liberation Serif, serif" fontWeight="bold" fontSize="11">{kind}</text></svg>
    )}
  </BadgeSlot>
);
function TrackCell({ item }) {
  const [text, badge, plain] = item;
  return (
    <Cell $badge={!!badge}>
      {text.split("|").map((line, i) => (
        <div key={line}>{i === 0 && badge && <Badge kind={badge} />}<Link>{line}</Link></div>
      ))}
      {plain === "none" ? <div>[No data-chrX]</div> : <Select $on={plain === "dense"}>{plain || "hide"}<Caret /></Select>}
    </Cell>
  );
}
const groups = [
  { title: "Custom Tracks", rows: [[41, [["User Track", "", "dense"]]]] },
  {
    title: "Mapping and Sequencing", pad: 1, rows: [
      [59, [["Base Position"], ["Assembly"], ["BAC End Pairs"], ["BU ORChID", "helix"], ["Chromosome Band"], ["deCODE|Recomb", "18", "none"]]],
      [61, [["ENCODE|Pilot", "helix"], ["FISH Clones", "18"], ["Fosmid End Pairs", "18"], ["Gap"], ["GC Percent"], ["GRC Incident"]]],
      [57, [["GRC Map|Contigs"], ["GRC Patch|Release"], ["Hg18 Diff"], ["Hg38 Diff"], ["Hi Seq Depth"], ["INSDC"]]],
      [43, [["LRG Regions"], ["Map Contigs"], ["Mappability", "helix"], ["Recomb Rate"], ["Restr Enzymes"], ["Short Match"]]],
      [39, [["STS Markers"]]],
    ],
  },
  {
    title: "Genes and Gene Predictions", rows: [
      [43, [["UCSC Genes"], ["RefSeq Genes"], ["AceView Genes"], ["CCDS"], ["Ensembl Genes"], ["EvoFold", "17"]]],
      [57, [["Exoniphy"], ["GENCODE..."], ["Geneid Genes"], ["Genscan Genes"], ["H-Inv 7.0"], ["IKMC Genes|Mapped"]]],
      [59, [["lincRNAs"], ["LRG Transcripts"], ["MGC Genes"], ["N-SCAN"], ["Old UCSC Genes"], ["ORFeome|Clones"]]],
    ],
  },
];

const navItems = [["Genomes", 97], ["Genome Browser", 143], ["Tools", 75], ["Mirrors", 85], ["Downloads", 110], ["My Data", 93], ["View", 70], ["Help", 69], ["About Us", 80]];
const trackButtons = [["track search", 88], ["default tracks", 95], ["default order", 88], ["hide all", 57], ["manage custom tracks", 149], ["track hubs", 77], ["configure", 69], ["reverse", 59], ["resize", 52], ["refresh", 56]];

/* ---------- taskbar ---------- */
const Explorer = () => (
  <svg width="33" height="30" viewBox="0 0 34 30">
    <path d="M1 3L3 1h10l2 2h6l1 3h8l2 3v18l-2 1H3l-2-2z" fill="#f0d988" stroke="#b99b4c" strokeWidth=".7" />
    <path d="M4 2h9v4H4zM13 4h9v4h-9zM20 6h9v4h-9z" fill="#fff" /><path d="M5 2h3v2H5z" fill="#1a3" /><path d="M14 4h3v2h-3z" fill="#d43" /><path d="M21 6h3v2h-3z" fill="#29d" />
    <path d="M1 8q8-2 12 1h19v18H2z" fill="#f8e9a3" />
    <path d="M5 30V19q0-2 2-2h20q2 0 2 2v11h-4v-7H10v7z" fill="#8fd0ee" stroke="#4b9cc4" />
    <path d="M10 10v12M5 17h11" stroke="#fff" strokeWidth=".8" opacity=".8" />
  </svg>
);
const Chrome = () => (
  <svg width="30" height="30" viewBox="0 0 30 30">
    <circle cx="15" cy="15" r="14" fill="#fbc90b" />
    <path d="M15 15L2.900 8A14 14 0 0127.500 8.500H15z" fill="#d93a2f" />
    <path d="M2.900 8A14 14 0 0014 29l5.500-10.500L9 17.500z" fill="#45a846" />
    <circle cx="15" cy="15" r="6.800" fill="#eee" /><circle cx="15" cy="15" r="5.400" fill="#2f73bd" />
  </svg>
);
const WordArt = styled.text`font: italic bold 13px "Liberation Serif", serif;`;
const WordSlot = styled.div`margin: 0 3px 2px 0;`;
const Word = () => (
  <WordSlot>
    <svg width="31" height="31" viewBox="1 0 31 31">
      <path d="M3 26V8q1-6 7-7h17v22L10 25z" fill="#c5d4ee" stroke="#7c97d4" />
      <path d="M2 26V9q1-8 9-8-4 5-4 13v9z" fill="#2f58ab" />
      <path d="M12 4l19 3-2 23-20-4z" fill="#f8f9fc" stroke="#b6bfd3" strokeWidth=".6" />
      <WordArt x="12" y="17" fill="#264a9b" transform="rotate(4 12 17)">W</WordArt>
      <path d="M24 9l5 .7M24 12.500l5 .7M24 16l4.500.7M12 20l16 2.300M11.500 23.500l16 2.600" stroke="#264a9b" strokeWidth="1.700" />
    </svg>
  </WordSlot>
);
const TaskApps = () => (
  <>
    <StartSlot><WinLogo /></StartSlot>
    <TaskButton><Explorer /></TaskButton>
    <TaskButton $active><Chrome /></TaskButton>
    <TaskButton><Word /></TaskButton>
  </>
);

const charms = [
  [155, <svg width="50" height="50" viewBox="0 0 50 50"><circle cx="31" cy="17" r="12.500" fill="none" stroke="#e6e6e6" strokeWidth="4.500" /><path d="M22 26L7 40.500" stroke="#e6e6e6" strokeWidth="6" strokeLinecap="round" /></svg>],
  [253, <svg width="50" height="50" viewBox="0 0 50 50"><circle cx="26" cy="25" r="17.500" fill="none" stroke="#f2f2f2" strokeWidth="4.500" /><g fill="#f2f2f2" stroke="#000" strokeWidth="2"><circle cx="34" cy="10" r="7.200" /><circle cx="9" cy="25" r="7.200" /><circle cx="34" cy="40" r="7.200" /></g></svg>],
  [353, <svg width="50" height="50" viewBox="0 0 50 50" fill="#f2f2f2"><path d="M4 10l17-2v16H4zM23 7.700L46 4v20H23zM4 26h17v16L4 40zM23 26h23v20l-23-3z" /></svg>],
  [453, <svg width="50" height="50" viewBox="0 0 50 50"><path d="M13 15q1-3 5-3h15q9 0 9 9v7q0 9-9 9H18q-4 0-5-3" fill="none" stroke="#f2f2f2" strokeWidth="5" /><rect x="4" y="17" width="21" height="15" fill="#f2f2f2" stroke="#000" strokeWidth="2" rx="1" /></svg>],
  [553, <svg width="50" height="50" viewBox="0 0 50 50"><circle cx="25" cy="25" r="12.300" fill="none" stroke="#f2f2f2" strokeWidth="5" />{[22.500, 67.500, 112.500, 157.500, 202.500, 247.500, 292.500, 337.500].map((a) => <rect key={a} x="22" y="5.500" width="6" height="7" fill="#f2f2f2" transform={`rotate(${a} 25 25)`} />)}</svg>],
];
const Folder = () => (
  <svg width="40" height="52" viewBox="0 0 40 52">
    <path d="M2 3l9-2 4 2 13 1 1 4v32H4z" fill="#e3c979" />
    <path d="M11 6l15-1v30H11z" fill="#efdc9c" />
    <path d="M12 13l12-3v34l-12 3z" fill="#fff" stroke="#bbb" strokeWidth=".6" />
    <path d="M21 14l13-4v32l-13 3z" fill="#f8f8f8" stroke="#aaa" strokeWidth=".6" />
    <path d="M24 20l6-1.500M24 24l6-1.500M24 28l6-1.500" stroke="#bbb" strokeWidth=".7" />
    <path d="M2 3l7 4 4 9v33L3 42z" fill="#f5e2a2" stroke="#d3b561" strokeWidth=".6" />
  </svg>
);

export default function App() {
  return (
    <Screen>
      <Global />
      <TabStrip>
        {tabs.map((t) => (
          <Tab key={t.label} $active={t.active}>
            {t.icon}
            <TabLabel $w={t.sound ? 127 : 145} $fade={t.fade}><Fit w={t.w}>{t.label}</Fit></TabLabel>
            {t.sound && <svg width="18" height="10" viewBox="0 0 18 10"><path d="M1 3.500h2L6 1v8L3 6.500H1z" fill="#222" /><path d="M7.500 3q1.500 2 0 4M9.500 1.500q2 3.500 0 7" stroke="#222" fill="none" /></svg>}
            <Close />
          </Tab>
        ))}
        <NewTab />
        <WindowButtons>
          <WindowButton $w={24}><svg width="12" height="6"><rect x=".5" y="1.500" width="11" height="4" rx="1" fill="#fff" stroke="#444" /></svg></WindowButton>
          <WindowButton $w={25}><svg width="13" height="12"><path d="M4.500.5h8v8h-8z" fill="#eee" stroke="#444" /><rect x=".5" y="3.500" width="8" height="8" fill="#fff" stroke="#444" /><rect x="3" y="6" width="3" height="3" fill="#aaa" stroke="#444" /></svg></WindowButton>
          <WindowButton $w={42}><svg width="12" height="11" viewBox="0 0 12 11"><path d="M2 1l8 9M10 1l-8 9" stroke="#444" strokeWidth="4" /><path d="M2 1l8 9M10 1l-8 9" stroke="#fff" strokeWidth="2" /></svg></WindowButton>
        </WindowButtons>
      </TabStrip>
      <Toolbar>
        <ToolIcon $w={29}><svg width="16" height="14" viewBox="0 0 16 14"><path d="M8 1L2 7l6 6M2.500 7H16" stroke="#f4f4f4" strokeWidth="3" fill="none" /></svg></ToolIcon>
        <ToolIcon $w={28}><svg width="16" height="14" viewBox="0 0 16 14"><path d="M8 1l6 6-6 6M13.500 7H0" stroke="#a7adb3" strokeWidth="3" fill="none" /></svg></ToolIcon>
        <ToolIcon $w={30}><svg width="17" height="17" viewBox="0 0 17 17"><path d="M13.500 11.500A6 6 0 1113 4.800" stroke="#f4f4f4" strokeWidth="2.800" fill="none" /><path d="M16 1v7H9z" fill="#f4f4f4" /></svg></ToolIcon>
        <ToolIcon $w={26}><svg width="15" height="16" viewBox="0 0 15 16"><path d="M7.500 0L15 8h-2v8H9.500v-5h-4v5H2V8H0z" fill="#f4f4f4" /><path d="M11 1h2v4h-2z" fill="#f4f4f4" /></svg></ToolIcon>
        <Omnibox>
          <Doc />
          <b><Fit w={157}>genome-euro.ucsc.edu</Fit></b>
          <Fit w={886}>{"/cgi-bin/hgTracks?db=hg19&position=chrX%3A28658577-29196671&hgsid=201750194_JGg8303DeblyynpqHFHdqqgAOZrV"}</Fit>
          <StarSlot><svg width="18" height="18" viewBox="0 0 18 18"><path d="M9 1l2.300 5.600 5.900.4-4.600 3.800 1.500 5.900L9 13.500l-5.100 3.200 1.500-5.900L.8 7l5.900-.4z" fill="#fff" stroke="#777" strokeWidth="1.200" /></svg></StarSlot>
        </Omnibox>
        <ToolIcon $w={41} $pl={11}><Paw /></ToolIcon>
        <ToolIcon $w={34}><svg width="19" height="19" viewBox="0 0 19 19"><path d="M5.500 0h8L19 5.500v8L13.500 19h-8L0 13.500v-8z" fill="#cf2a17" /><text x="9.500" y="12.800" fill="#fff" fontFamily="Liberation Sans" fontWeight="bold" fontSize="8.500" textAnchor="middle">ABP</text></svg></ToolIcon>
        <ToolIcon $w={33}><svg width="17" height="19"><path d="M2.500 0v19M8.500 0v19M14.500 0v19" stroke="#686e74" strokeWidth="2" strokeDasharray="7 5" /><path d="M0 9.500h17" stroke="#2d5ea6" strokeWidth="4" strokeDasharray="4.500 1.500" /></svg></ToolIcon>
        <ToolIcon $w={29}><svg width="12" height="19" viewBox="0 0 12 19"><path d="M0 18.500l2-3h8l2 3z" fill="#fff" /><path d="M6.500 16.500L5.500 3q0-2 1.800-1.500 1 2-3.500 5.500-3 4 2 5 5-.5 3-4-3-2-4 1" stroke="#222" strokeWidth="1.400" fill="none" /></svg></ToolIcon>
        <ToolIcon $w={36}><svg width="19" height="17"><path d="M0 0h19v7q0 9-9.500 10Q0 16 0 7z" fill="#555a5f" /><path d="M5 6l4.500 4.500L14 6" stroke="#dfe3e6" strokeWidth="2.400" fill="none" /></svg></ToolIcon>
        <svg width="14" height="14"><path d="M0 2h14M0 7h14M0 12h14" stroke="#f4f4f4" strokeWidth="3" /></svg>
      </Toolbar>
      <Bookmarks>
        {bookmarks.map(([icon, label, w, slot], i) => (
          <Bookmark key={i} $w={slot}>{bookmarkIcons[icon]}{label && <Fit w={w}>{label}</Fit>}</Bookmark>
        ))}
        <span>»</span>
      </Bookmarks>
      <Viewport>
        <LeftEdge />
        <Page>
          <Nav>
            <ToolIcon $w={58}><svg width="23" height="19" viewBox="0 0 23 19"><path d="M11.500 5L19 11.500V19h-5v-5H9v5H4v-7.500z" fill="#7c9cba" /><path d="M1 10.500L11.500 1.500 22 10.500M17.500 2v4" stroke="#7c9cba" strokeWidth="2" fill="none" /></svg></ToolIcon>
            {navItems.map(([t, w]) => <NavItem key={t} $w={w}>{t}</NavItem>)}
          </Nav>
          <Title><Fit w={813}>UCSC Genome Browser on Human Feb. 2009 (GRCh37/hg19) Assembly</Fit></Title>
          <Row $h={21} $pl={2}>
            <Lead>move</Lead>
            {[["<<<", 40], ["<<", 36], ["<", 32], [">", 32], [">>", 36], [">>>", 40]].map(([t, w]) => <Button key={t} $w={w} $dim>{t}</Button>)}
            <Lead $ml={4}>zoom in</Lead>
            {[["1.5x", 41], ["3x", 39], ["10x", 37], ["base", 44]].map(([t, w]) => <Button key={t} $w={w}>{t}</Button>)}
            <Lead $ml={3}>zoom out</Lead>
            {[["1.5x", 41], ["3x", 38], ["10x", 37], ["100x", 44]].map(([t, w]) => <Button key={t} $w={w}>{t}</Button>)}
          </Row>
          <Row $h={31} $mt={5} $gap={5}>
            <PositionBox><Fit w={202}>chrX:28,658,577-29,196,671</Fit></PositionBox>
            <Fit w={84}>538,095 bp.</Fit>
            <SearchBox><Fit w={255}>enter position, gene symbol or search terms</Fit></SearchBox>
            <Button $w={30}>go</Button>
          </Row>
          <Ideogram><IdeogramSvg /></Ideogram>
          <TrackFrame><Tracks /></TrackFrame>
          <Below>
            <MoveBlock>
              <span>move start</span>
              <Row $h={21}><Button $w={32} $dim>{"<"}</Button><NumberInput>2.0</NumberInput><Button $w={32} $dim>{">"}</Button></Row>
            </MoveBlock>
            <Hint>
              <Fit w={1006}>Click on a feature for details. Click or drag in the base position track to zoom in. Click side bars for track options. Drag side bars or labels up or</Fit>
              <Fit w={445}>down to reorder tracks. Drag tracks left or right to new position.</Fit>
            </Hint>
            <MoveBlock $right>
              <span>move end</span>
              <Row $h={21}><Button $w={32} $dim>{"<"}</Button><NumberInput>100.0</NumberInput><Button $w={32} $dim>{">"}</Button></Row>
            </MoveBlock>
          </Below>
          <Row $h={21} $gap={4.400}>
            {trackButtons.map(([t, w]) => <Button key={t} $w={w}>{t}</Button>)}
          </Row>
          <NoteRow>
            <Button $w={81}>collapse all</Button>
            <Note>
              <Fit w={520}>Use drop-down controls below and press refresh to alter tracks displayed.</Fit><br />
              <Fit w={568}>Tracks with lots of items will automatically be displayed in more compact modes.</Fit>
            </Note>
            <Button $w={75}>expand all</Button>
          </NoteRow>
          {groups.map((g) => (
            <Group key={g.title} $pad={g.pad}>
              <GroupBar><Collapse /><GroupTitle>{g.title}</GroupTitle><Button $w={56}>refresh</Button></GroupBar>
              {g.rows.map(([h, items], i) => (
                <GridRow key={i} $h={h}>{items.map((it) => <TrackCell key={it[0]} item={it} />)}</GridRow>
              ))}
            </Group>
          ))}
        </Page>
        <Scrollbar>
          <svg width="8" height="5"><path d="M4 0l4 5H0z" fill="#9a9a9a" /></svg>
          <Thumb />
          <svg width="8" height="5"><path d="M4 5l4-5H0z" fill="#444" /></svg>
        </Scrollbar>
      </Viewport>
      <Shelf>
        <DownloadItem>
          <svg width="18" height="17" viewBox="0 0 18 17"><path d="M2 1h12l3 2v3H5zM2 1l3 5" fill="#9a1e72" stroke="#222" strokeWidth=".7" /><path d="M2 6h12l3 1v3H5z" fill="#2273c4" stroke="#222" strokeWidth=".7" /><path d="M2 11h12l3 1v4H5z" fill="#179a6e" stroke="#222" strokeWidth=".7" /><path d="M1 2l4 4M1 7l4 3M1 12l4 4" stroke="#fff" /></svg>
          <Fit w={118}>LTRs_identification.zip</Fit>
          <DownloadMenu><svg width="6" height="4"><path d="M0 0h6L3 4z" fill="#333" /></svg></DownloadMenu>
        </DownloadItem>
        <ShelfRight>
          <svg width="12" height="13"><path d="M3 0h6v6h3l-6 7-6-7h3z" fill="#5a5a5a" /></svg>
          <AllDownloads><Fit w={132}>Все скачанные файлы...</Fit></AllDownloads>
          <Close />
        </ShelfRight>
      </Shelf>
      <TaskbarBox $w={1920} $pl={15}>
        <TaskApps />
        <Tray>
          <Expand><svg width="8" height="4"><path d="M4 0L8 4H0z" fill="#fff" /></svg></Expand>
          <svg width="17" height="15"><path d="M1.500 0v15" stroke="#fff" strokeWidth="1.500" /><path d="M3 1h6v2h6l-2 2.500 2 2.500H8V7H3z" fill="#fff" /></svg>
          <svg width="17" height="16" viewBox="0 0 17 16"><Dropbox c="#fff" /><circle cx="11.500" cy="11.500" r="4.500" fill="#2ba02e" /><path d="M9.500 11.500l1.500 1.500 2.500-3" stroke="#fff" fill="none" /></svg>
          <svg width="16" height="13"><path d="M1.500 13v-3M4.500 13V8M7.500 13V6M10.500 13V3M13.500 13V0" stroke="#fff" strokeWidth="2" /></svg>
          <svg width="17" height="14"><path d="M0 4h3l4-4v14L3 10H0z" fill="#fff" /><path d="M9 4.500q2 2.500 0 5M11.500 2.500q3.500 4.500 0 9M14 1q4 6 0 12" stroke="#fff" fill="none" strokeWidth="1.100" /></svg>
          <Lang><Fit w={20}>CES</Fit></Lang>
          <Clock><Fit w={28}>14:47</Fit><Fit w={54}>10.01.2015</Fit></Clock>
        </Tray>
      </TaskbarBox>
      <Desktop>
        <WallGrid>
          {Array.from({ length: 126 }, (_, i) => <WallCell key={i} $red={i % 18 === 0 ? "r" : i % 18 === 6 ? "l" : ""} />)}
        </WallGrid>
        <DesktopIcon><Folder /><Fit w={25}>blast</Fit></DesktopIcon>
        {charms.map(([top, icon]) => <Charm key={top} $top={top}>{icon}</Charm>)}
      </Desktop>
      <Strip />
      <TaskbarBox $w={1366} $ml={262} $pl={12}><TaskApps /></TaskbarBox>
    </Screen>
  );
}
